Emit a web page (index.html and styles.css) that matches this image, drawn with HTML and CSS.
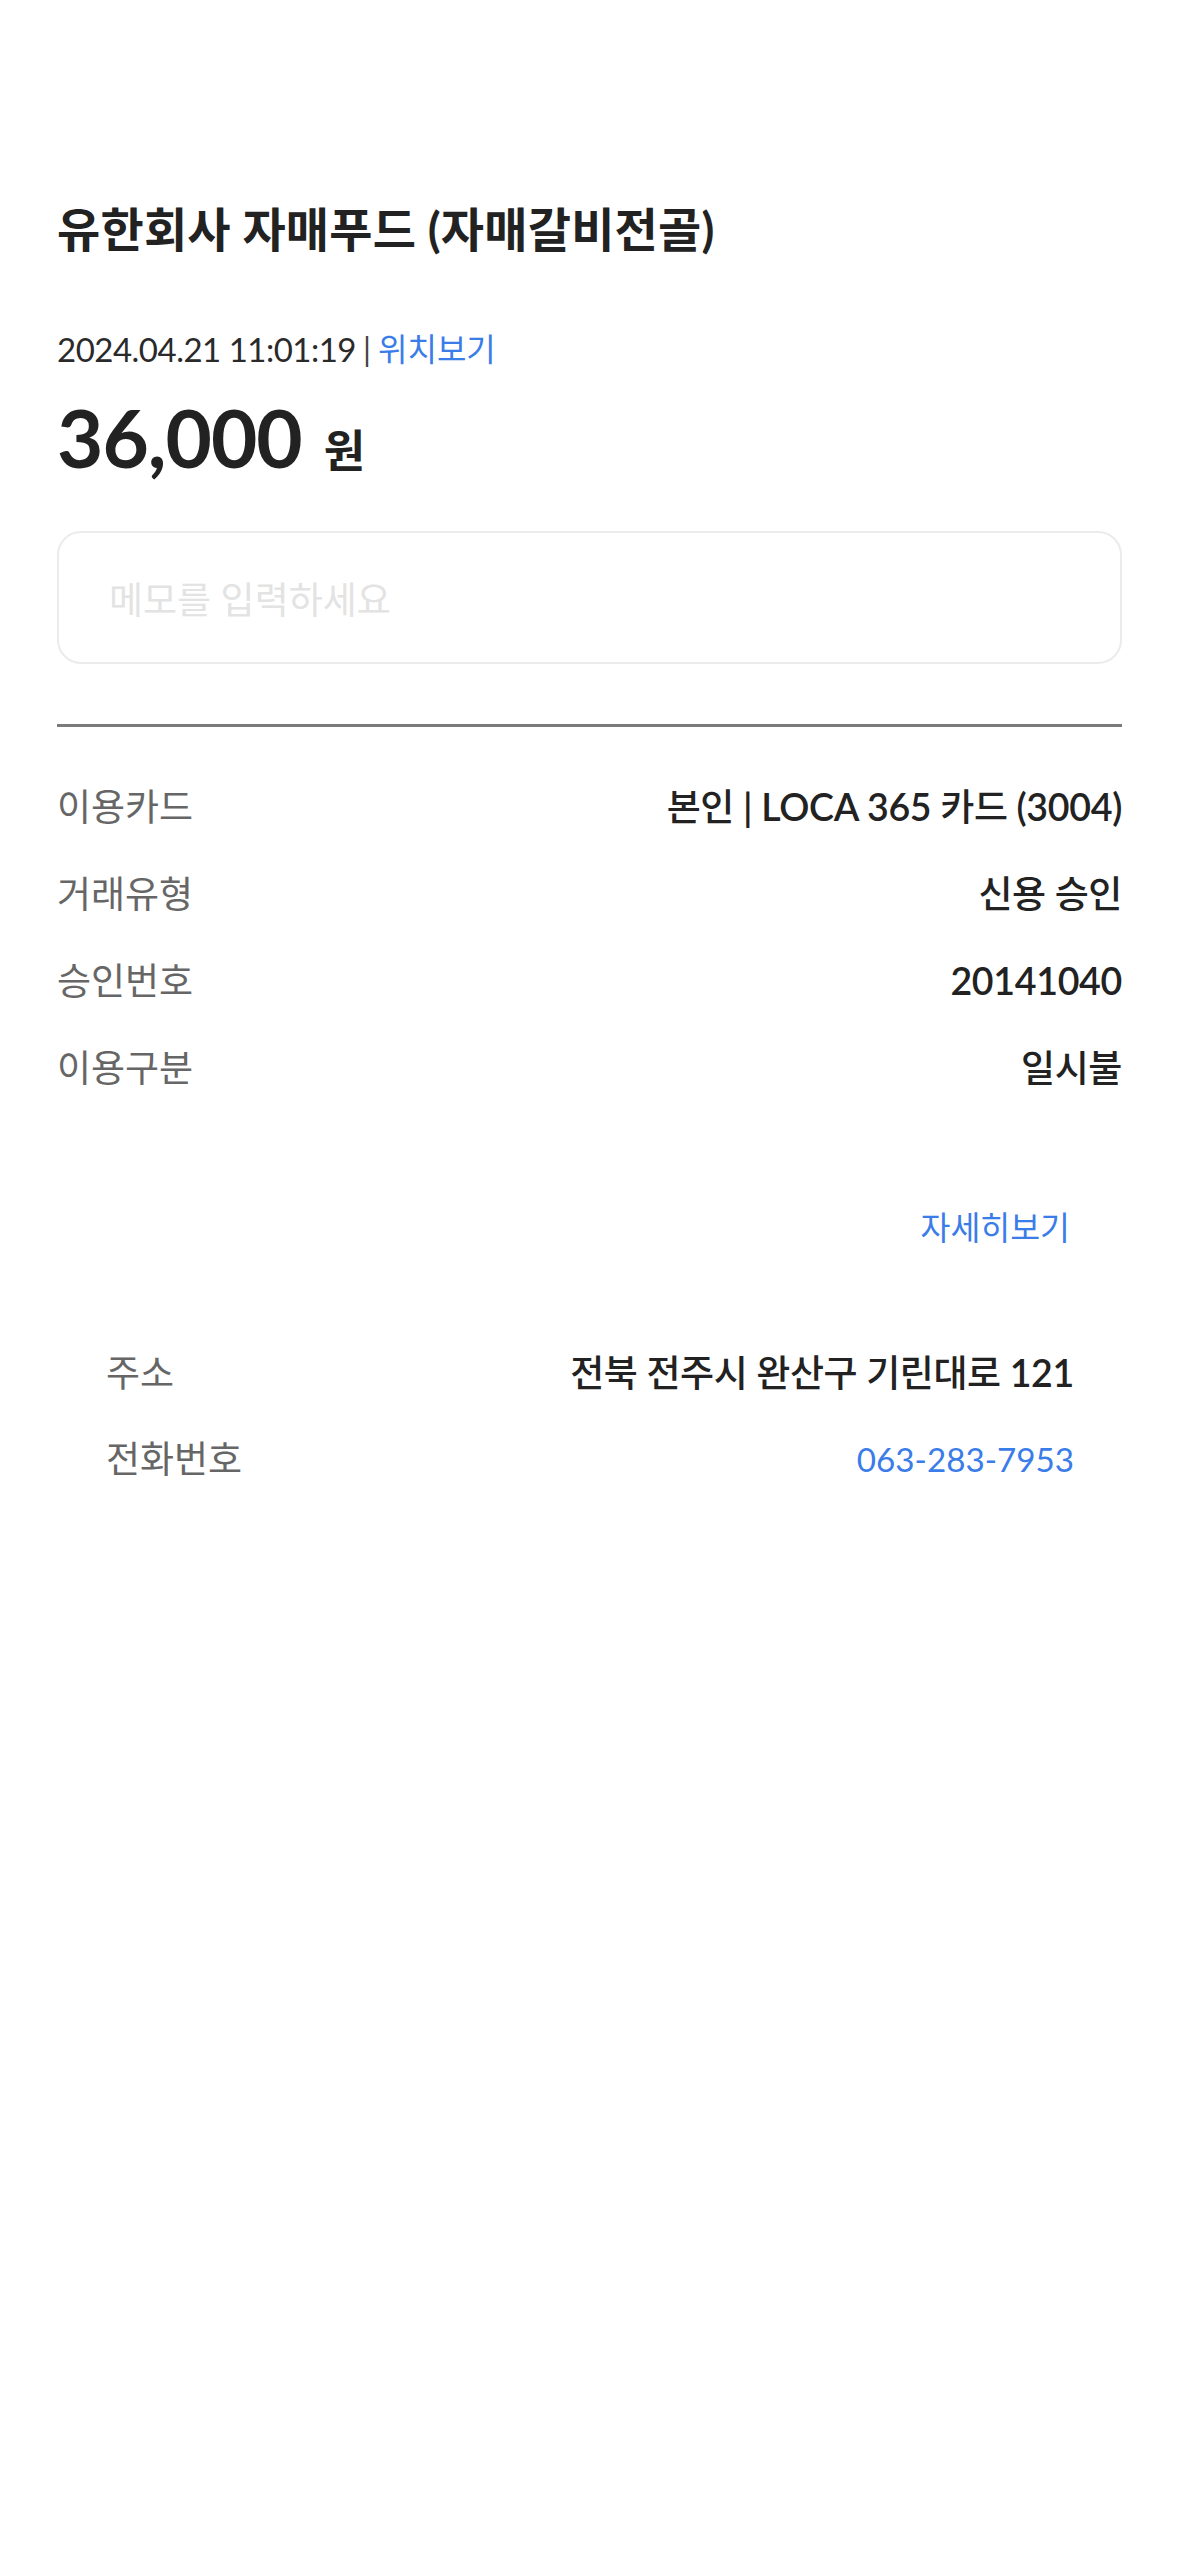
FILE: index.html
```html
<!DOCTYPE html>
<html lang="ko">
<head>
<meta charset="utf-8">
<title>거래 상세</title>
<link rel="stylesheet" href="styles.css">
</head>
<body>
<main class="page">
  <h1 class="title">유한회사 자매푸드 (자매갈비전골)</h1>

  <div class="meta">
    <span class="date">2024.04.21 11:01:19</span>
    <span class="sep">|</span>
    <a class="link meta-link">위치보기</a>
  </div>

  <div class="amount">
    <span class="amount-num">36,000</span>
    <span class="amount-unit">원</span>
  </div>

  <div class="memo">메모를 입력하세요</div>

  <div class="divider"></div>

  <dl class="info">
    <div class="row">
      <dt class="label">이용카드</dt>
      <dd class="val">본인 <span class="lat">| LOCA 365</span> 카드 <span class="lat">(3004)</span></dd>
    </div>
    <div class="row">
      <dt class="label">거래유형</dt>
      <dd class="val">신용 승인</dd>
    </div>
    <div class="row">
      <dt class="label">승인번호</dt>
      <dd class="val"><span class="lat">20141040</span></dd>
    </div>
    <div class="row">
      <dt class="label">이용구분</dt>
      <dd class="val">일시불</dd>
    </div>
  </dl>

  <section class="store">
    <div class="more"><a class="link more-link">자세히보기</a></div>
    <dl class="store-info">
      <div class="row store-row">
        <dt class="label">주소</dt>
        <dd class="val">전북 전주시 완산구 기린대로 <span class="lat">121</span></dd>
      </div>
      <div class="row store-row">
        <dt class="label">전화번호</dt>
        <dd class="phone">063-283-7953</dd>
      </div>
    </dl>
  </section>
</main>
</body>
</html>
```

FILE: styles.css
```css
html, body {
  margin: 0;
  padding: 0;
  background: #ffffff;
}

body {
  font-family: Lato, "Noto Sans CJK KR", sans-serif;
  color: #222222;
}

.page {
  padding: 199px 57px 0 57px;
}

.title {
  margin: 0;
  font-size: 47px;
  line-height: 60px;
  font-weight: 700;
  letter-spacing: 0.2px;
  color: #222222;
}

.meta {
  margin-top: 68px;
  display: flex;
  align-items: center;
  gap: 7px;
  height: 44px;
}

.date {
  font-size: 33px;
  line-height: 44px;
  letter-spacing: -0.5px;
  color: #2a2a2a;
}

.sep {
  font-size: 32px;
  line-height: 44px;
  color: #444444;
}

.link {
  color: #3a7ce8;
  text-decoration: none;
}

.meta-link {
  font-size: 32px;
  line-height: 44px;
}

.amount {
  margin-top: 18px;
  display: flex;
  align-items: baseline;
  gap: 22px;
  line-height: 96px;
}

.amount-num {
  font-size: 80px;
  font-weight: 700;
  letter-spacing: -1px;
  color: #222222;
}

.amount-unit {
  font-size: 45px;
  font-weight: 700;
  color: #222222;
}

.memo {
  margin-top: 32px;
  box-sizing: border-box;
  height: 133px;
  border: 2px solid #ebebeb;
  border-radius: 24px;
  padding: 0 50px;
  display: flex;
  align-items: center;
  font-size: 37px;
  color: #e3e3e3;
}

.divider {
  margin-top: 60px;
  height: 3px;
  background: #7b7b7b;
}

.info {
  margin: 36px 0 0 0;
  padding: 0;
}

.row {
  display: flex;
  justify-content: space-between;
  align-items: center;
  height: 87px;
}

.label {
  margin: 0;
  font-size: 37px;
  line-height: 48px;
  color: #666666;
}

.val {
  margin: 0;
  font-size: 37px;
  line-height: 48px;
  font-weight: 500;
  letter-spacing: -0.4px;
  color: #222222;
}

.val .lat {
  font-size: 37.5px;
  font-weight: 600;
  letter-spacing: -0.3px;
}

.store {
  padding: 0 48px 0 49px;
}

.more {
  margin-top: 93px;
  display: flex;
  justify-content: flex-end;
  padding-right: 4px;
}

.more-link {
  font-size: 32.5px;
  line-height: 48px;
}

.store-info {
  margin: 78px 0 0 0;
  padding: 0;
}

.store-row {
  height: 86px;
}

.phone {
  margin: 0;
  font-size: 33.2px;
  line-height: 48px;
  color: #3a7ce8;
  letter-spacing: 0;
}
```
